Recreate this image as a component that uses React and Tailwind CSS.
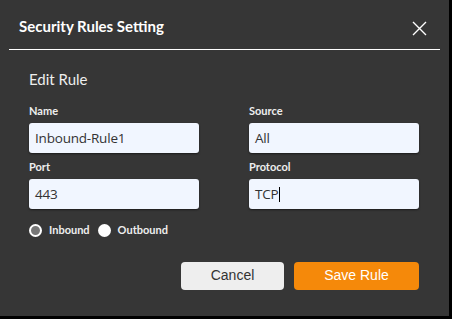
import React from 'react';

const Field = ({ label, value, caret }) => (
  <div className="flex flex-col">
    <label className="h-[14px] text-[11px] leading-[14px] font-bold text-[#eeeeee] mb-[5px]">{label}</label>
    <div className="h-[30px] bg-[#f1f6ff] rounded-[3px] shadow-[0_1px_2px_rgba(0,0,0,0.5)] flex items-center pl-[6px] text-[13.5px] tracking-[-0.2px] text-[#333333] font-['Open_Sans',sans-serif]">
      <span>{value}</span>
      {caret && <span className="w-px h-[15px] bg-black ml-px" />}
    </div>
  </div>
);

const App = () => {
  return (
    <div className="w-[452px] h-[319px] bg-black font-['Lato',sans-serif]">
      <div className="w-[449px] h-[316px] bg-[#363636] flex flex-col">
        {/* header */}
        <div className="mx-[9px] h-[50px] border-b border-white flex items-center justify-between pl-[10px] pr-[13px] pt-[3px]">
          <h1 className="text-[15px] font-bold text-white">Security Rules Setting</h1>
          <svg width="15" height="15" viewBox="0 0 15 15" className="text-white mt-[5px]">
            <path d="M1 1L14 14M14 1L1 14" stroke="currentColor" strokeWidth="1.4" />
          </svg>
        </div>

        <div className="px-[29px] flex flex-col">
          <h2 className="mt-[19px] mb-[15px] text-[15px] leading-[20px] text-[#eeeeee]">Edit Rule</h2>

          <div className="grid grid-cols-[170px_170px] gap-x-[50px] gap-y-[7px]">
            <Field label="Name" value="Inbound-Rule1" />
            <Field label="Source" value="All" />
            <Field label="Port" value="443" />
            <Field label="Protocol" value="TCP" caret />
          </div>

          <div className="mt-[13px] flex items-center text-[11px] font-bold text-[#eeeeee]">
            <span className="w-[13px] h-[13px] rounded-full bg-[#777777] border-2 border-white" />
            <span className="ml-[7px]">Inbound</span>
            <span className="ml-[8px] w-[13px] h-[13px] rounded-full bg-white" />
            <span className="ml-[7px]">Outbound</span>
          </div>

          <div className="mt-[23px] flex justify-end gap-[10px] pr-px font-['Liberation_Sans',Arial,sans-serif] text-[14px]">
            <button className="w-[103px] h-[28px] rounded-[4px] bg-[#eeeeee] text-[#333333]">Cancel</button>
            <button className="w-[125px] h-[28px] rounded-[4px] bg-[#f5890a] text-white">Save Rule</button>
          </div>
        </div>
      </div>
    </div>
  );
};

export default App;
